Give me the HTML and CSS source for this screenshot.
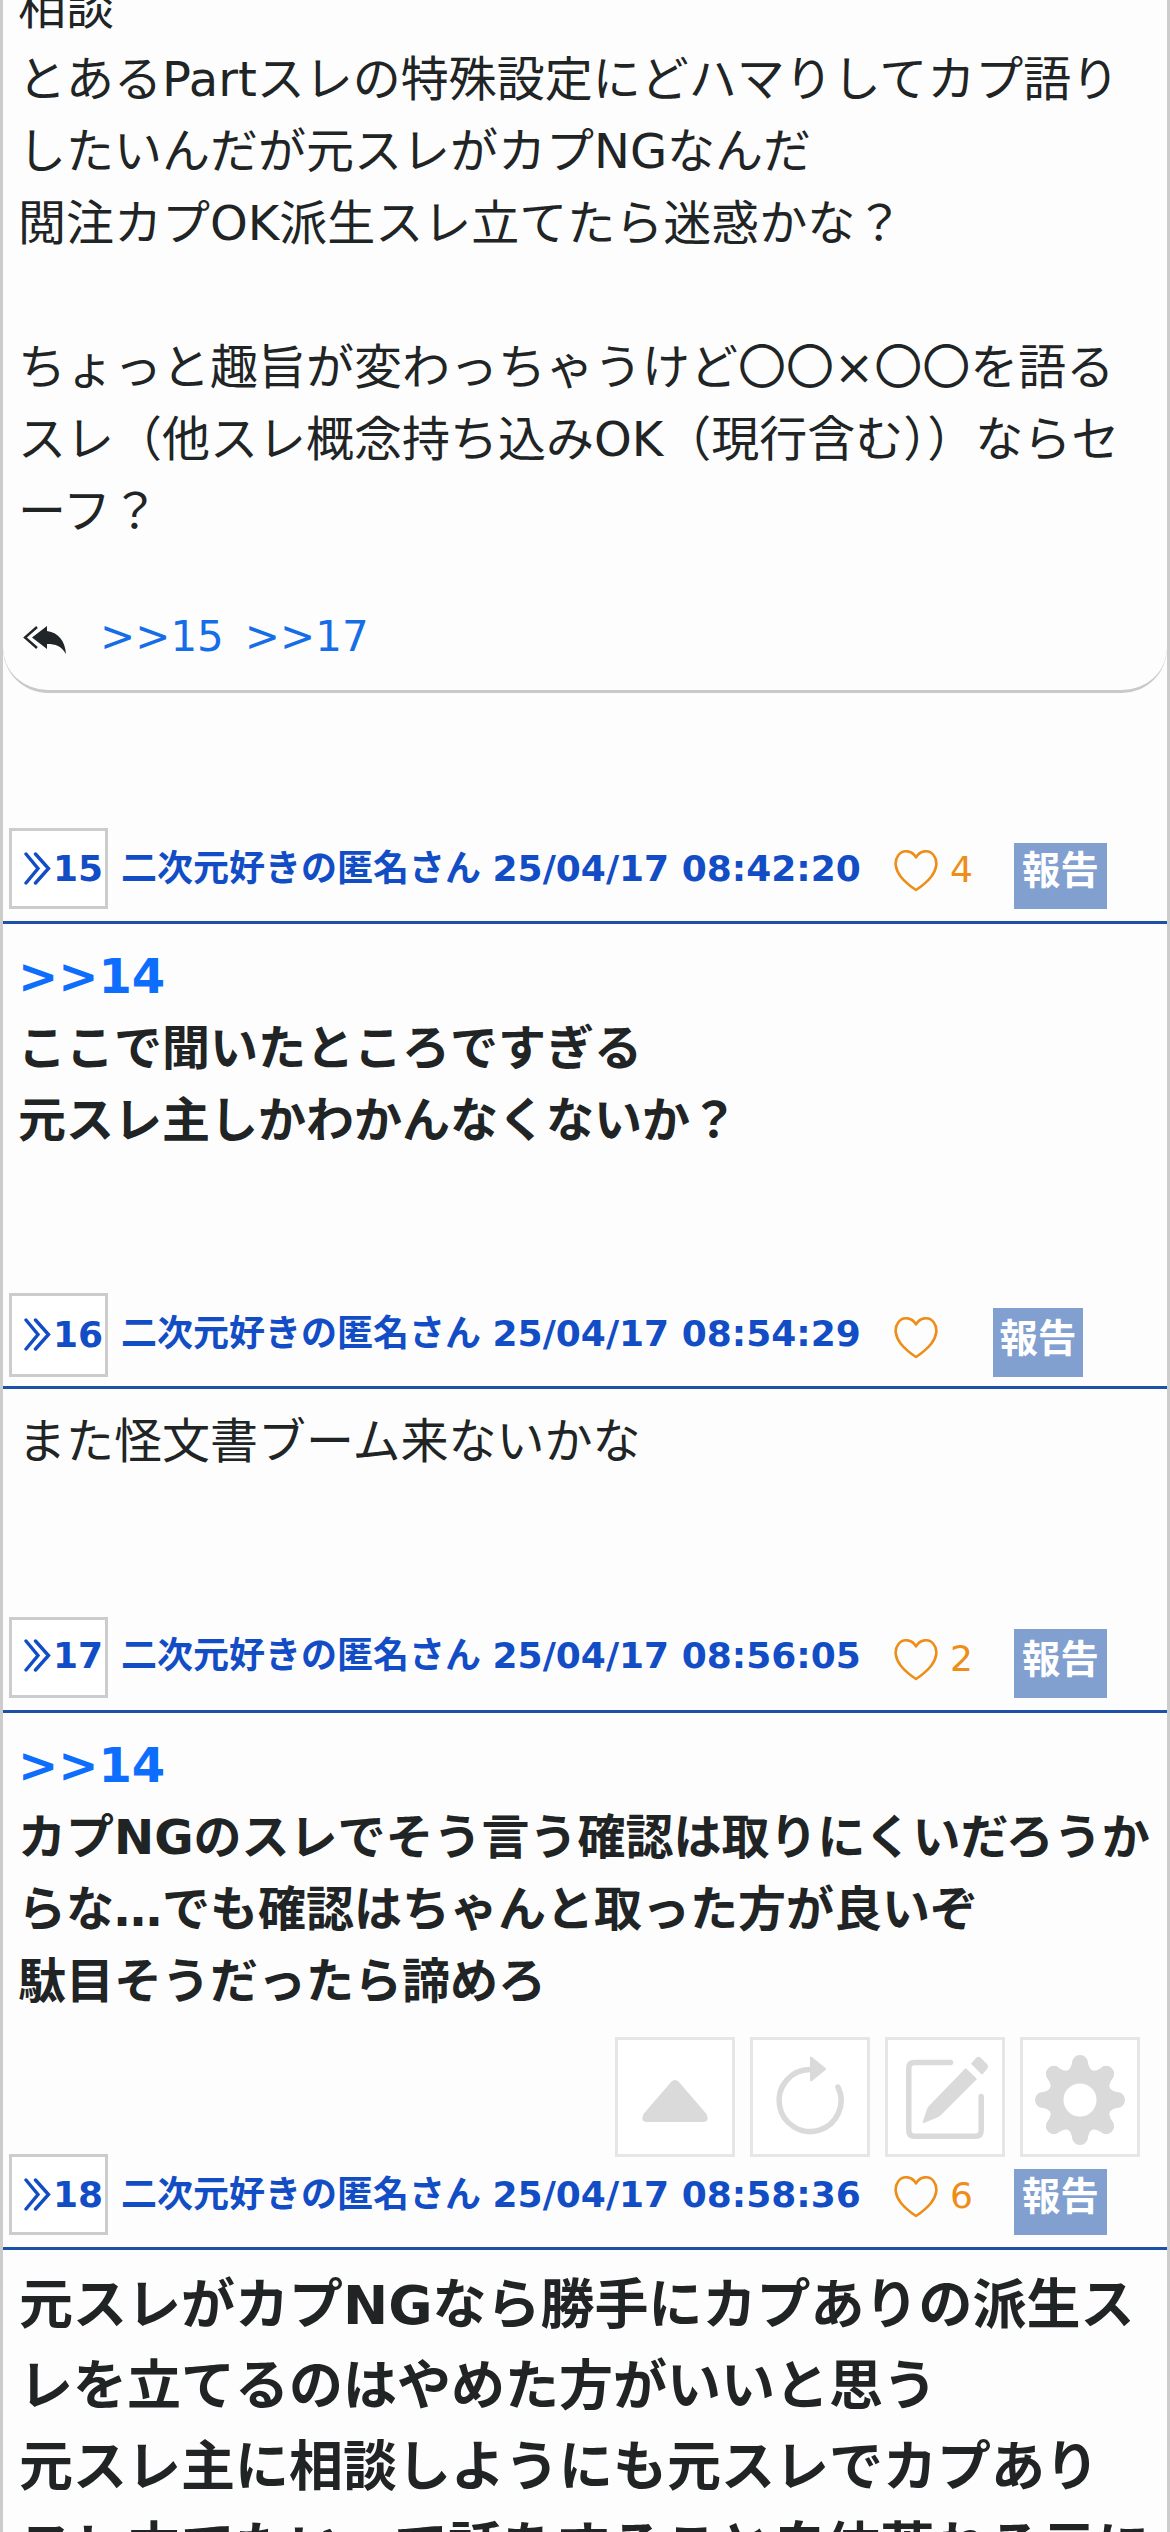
FILE: index.html
```html
<!DOCTYPE html>
<html lang="ja">
<head>
<meta charset="utf-8">
<title>スレッド</title>
<link rel="stylesheet" href="styles.css">
</head>
<body>
<svg class="defs" aria-hidden="true">
  <symbol id="quote" viewBox="0 0 27 33"><path d="M2 2 L14 16.500 L2 31 M11.500 2 L24.500 16.500 L11.500 31" fill="none" stroke="currentColor" stroke-width="3.400" stroke-linecap="round"/></symbol>
  <symbol id="heart" viewBox="0 0 44 42"><path d="M22 7.500 C18 0 9 -.5 4.500 5 C-.5 11.500 1.500 20 7 27 C11 32 16 36 22 40 C28 36 33 32 37 27 C42.500 20 44.500 11.500 39.500 5 C35 -.5 26 0 22 7.500Z" fill="none" stroke="currentColor" stroke-width="2.600" stroke-linejoin="round"/></symbol>
</svg>
<main class="thread">
  <article class="post">
    <div class="body">相談<br>とあるPartスレの特殊設定にどハマりしてカプ語りしたいんだが元スレがカプNGなんだ<br>閲注カプOK派生スレ立てたら迷惑かな？<br><br>ちょっと趣旨が変わっちゃうけど〇〇×〇〇を語るスレ（他スレ概念持ち込みOK（現行含む））ならセーフ？</div>
    <div class="replies">
      <svg class="reply-icon" viewBox="0 0 44 28"><path d="M24 0 V5 C36 7 42 15 43 28 C38 20 33 18 24 18 V23 L9 11.500Z" fill="currentColor"/><path d="M14 1 L2 11.500 L14 22" fill="none" stroke="currentColor" stroke-width="2.400"/></svg>
      <a>&gt;&gt;15</a><a>&gt;&gt;17</a>
    </div>
  </article>
  <article class="post">
    <header class="head">
      <span class="num"><svg><use href="#quote"/></svg>15</span>
      <span class="name">二次元好きの匿名さん <span class="date">25/04/17 08:42:20</span></span>
      <span class="like"><svg><use href="#heart"/></svg>4</span>
      <span class="report">報告</span>
    </header>
    <div class="body bold"><a>&gt;&gt;14</a><br>ここで聞いたところですぎる<br>元スレ主しかわかんなくないか？</div>
  </article>
  <article class="post">
    <header class="head tall">
      <span class="num"><svg><use href="#quote"/></svg>16</span>
      <span class="name">二次元好きの匿名さん <span class="date">25/04/17 08:54:29</span></span>
      <span class="like empty"><svg><use href="#heart"/></svg></span>
      <span class="report">報告</span>
    </header>
    <div class="body">また怪文書ブーム来ないかな</div>
  </article>
  <article class="post">
    <header class="head raised">
      <span class="num"><svg><use href="#quote"/></svg>17</span>
      <span class="name">二次元好きの匿名さん <span class="date">25/04/17 08:56:05</span></span>
      <span class="like"><svg><use href="#heart"/></svg>2</span>
      <span class="report">報告</span>
    </header>
    <div class="body bold"><a>&gt;&gt;14</a><br>カプNGのスレでそう言う確認は取りにくいだろうからな…でも確認はちゃんと取った方が良いぞ<br>駄目そうだったら諦めろ</div>
  </article>
  <article class="post">
    <header class="head">
      <span class="num"><svg><use href="#quote"/></svg>18</span>
      <span class="name">二次元好きの匿名さん <span class="date">25/04/17 08:58:36</span></span>
      <span class="like"><svg><use href="#heart"/></svg>6</span>
      <span class="report">報告</span>
    </header>
    <div class="body large">元スレがカプNGなら勝手にカプありの派生スレを立てるのはやめた方がいいと思う<br>元スレ主に相談しようにも元スレでカプあり<br>スレ立てたいって話をすること自体荒れる元に</div>
  </article>
</main>
<nav class="tools">
  <button class="tool"><svg viewBox="0 0 114 114"><path d="M53.500 41.500 Q57 38.500 60.500 41.500 L88.500 74 Q92 82 85 82 H29 Q22 82 25.500 74Z"/></svg></button>
  <button class="tool"><svg viewBox="0 0 114 114"><path d="M85 47 A31 31 0 1 1 57 29.500" fill="none" stroke="#dadada" stroke-width="5.500" stroke-linecap="round"/><path d="M57 18 Q57 15.500 59 17 L72.500 28 Q74 29 72.500 30 L59 41 Q57 42 57 40Z"/></svg></button>
  <button class="tool"><svg viewBox="0 0 114 114"><path d="M62.500 22.500 H26.500 Q20.800 22.500 20.800 28 V90.500 Q20.800 96.200 26.500 96.200 H87.500 Q93.200 96.200 93.200 90.500 V56.500" fill="none" stroke="#dadada" stroke-width="5.500" stroke-linecap="round"/><path d="M77.700 28 L89 39 L53 75 Q51 77 48 78 L36 83 Q34 83.500 35 81 L39 69 Q39.500 67.500 41 66Z M83 23.700 L88 18 Q90.500 15.500 93 18 L99 24 Q101 26.500 99 29 L94 34.700Z"/></svg></button>
  <button class="tool"><svg viewBox="0 0 114 114"><g transform="translate(57 60)"><circle r="24.300" fill="none" stroke="#dadada" stroke-width="15.600"/><path id="tooth" d="M-14 -28 Q-9 -31 -8 -37 A8 8 0 0 1 8 -37 Q9 -31 14 -28Z"/><use href="#tooth" transform="rotate(45)"/><use href="#tooth" transform="rotate(90)"/><use href="#tooth" transform="rotate(135)"/><use href="#tooth" transform="rotate(180)"/><use href="#tooth" transform="rotate(225)"/><use href="#tooth" transform="rotate(270)"/><use href="#tooth" transform="rotate(315)"/></g></svg></button>
</nav>
</body>
</html>
```
FILE: styles.css
```css
* { box-sizing: border-box; }
body {
  margin: 0;
  height: 2532px;
  overflow: hidden;
  background: #fdfdfd;
  color: #212425;
  font-family: "DejaVu Sans", "Noto Sans CJK JP", sans-serif;
}
.defs { position: absolute; width: 0; height: 0; }
.thread {
  height: 2532px;
  overflow: hidden;
  border: solid #ccc;
  border-width: 0 3px;
  display: flex;
  flex-direction: column;
}
.post { flex: none; }
.post:nth-child(1) {
  height: 693px;
  border-bottom: 3px solid #c9c9c9;
  border-radius: 0 0 45px 45px;
}
.post:nth-child(1) .body { margin-top: -29px; padding-top: 0; }
.post:nth-child(2) { padding-top: 135px; height: 600px; }
.post:nth-child(3) { height: 324px; }
.post:nth-child(4) { height: 537px; }
.body { padding: 16px 15px 0; font-size: 48px; line-height: 72px; }
.bold, .large { font-weight: bold; }
.large { padding: 15px 0 0 16px; font-size: 54px; line-height: 81px; }
.body a { color: #0d6efd; }
.replies {
  display: flex;
  align-items: center;
  gap: 21px;
  padding: 65px 0 0 20px;
  color: #156de8;
  font-size: 42px;
}
.reply-icon { width: 44px; height: 28px; margin: 6px 12px 0 0; color: #212529; }
.head {
  height: 96px;
  display: flex;
  align-items: flex-start;
  border-bottom: 3px solid #1e50a8;
  padding-left: 6px;
  color: #124dc6;
  font-size: 36px;
  font-weight: bold;
}
.num {
  display: flex;
  align-items: center;
  justify-content: flex-end;
  width: 99px;
  height: 81px;
  padding-right: 2px;
  border: 3px solid #ccc;
  background: #fff;
}
.num svg { width: 27px; height: 33px; margin-right: 2px; }
.tall .num { height: 84px; padding-bottom: 2px; }
.raised .num { padding-bottom: 5px; }
.name { width: 739px; margin-left: 13px; line-height: 82px; white-space: nowrap; }
.raised .name { line-height: 77px; }
.date { margin-left: -1px; }
.like {
  display: flex;
  align-items: center;
  gap: 12px;
  width: 120px;
  margin-left: 34px;
  padding-top: 18px;
  color: #ee8d18;
  font-weight: normal;
}
.like svg { width: 44px; height: 42px; margin-top: 4px; }
.like.empty { width: 99px; padding-top: 20px; }
.report {
  width: 93px;
  height: 66px;
  margin-top: 15px;
  background: #819fcf;
  color: #fff;
  font-size: 38.4px;
  line-height: 55px;
  text-align: center;
}
.tall .report { width: 90px; height: 69px; line-height: 61px; }
.raised .report { height: 69px; margin-top: 12px; line-height: 62px; }
.tools {
  position: fixed;
  left: 615px;
  top: 2037px;
  display: flex;
  gap: 15px;
}
.tool {
  width: 120px;
  height: 120px;
  padding: 0;
  border: 3px solid #e6e6e6;
  background: #fff;
}
.tool svg { display: block; width: 114px; height: 114px; fill: #dadada; }
```
